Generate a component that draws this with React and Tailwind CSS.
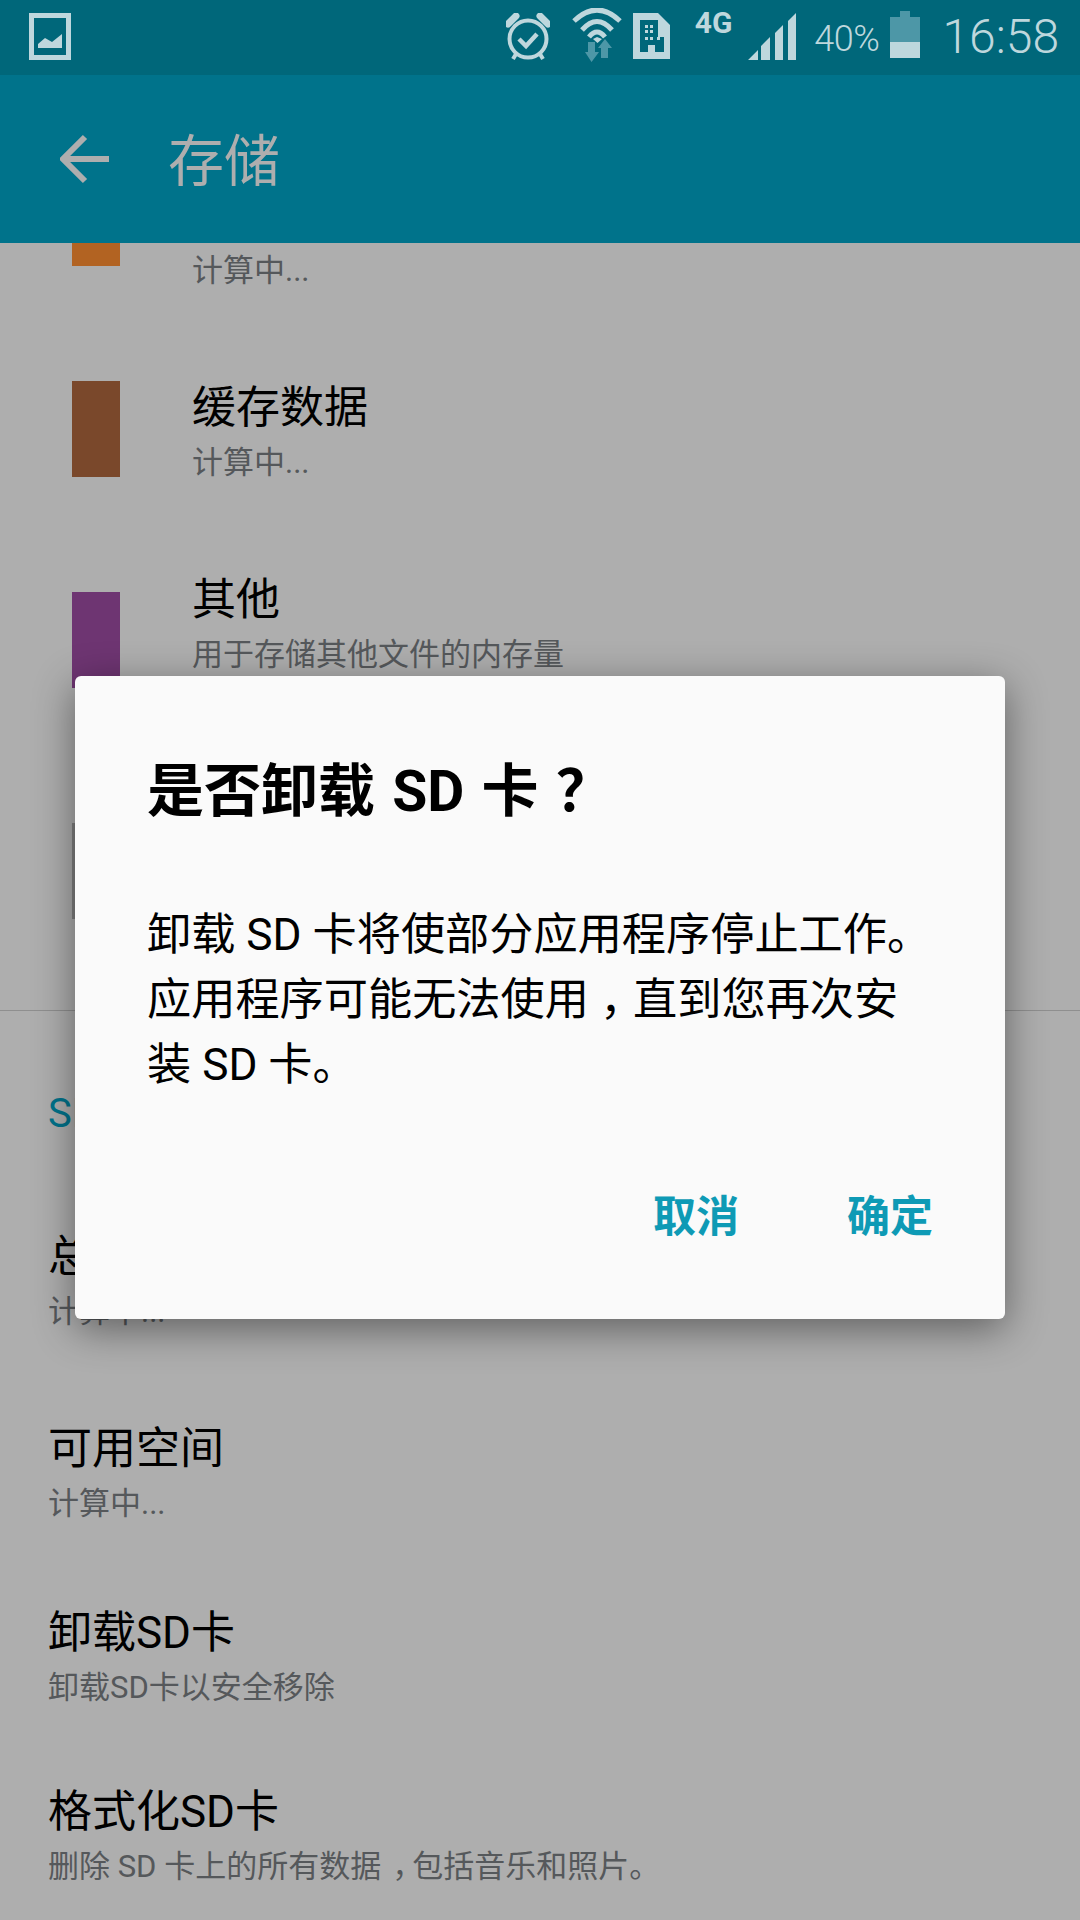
import React from 'react';

const FONT = "font-['Roboto','Noto_Sans_CJK_SC',sans-serif]";

// colours are the dimmed ones, the page sits behind a dialog scrim
const BLOCKS = [
  { color: 'bg-[#b26322]', mt: 'mt-0' },
  { color: 'bg-[#7a482b]', mt: 'mt-[115px]' },
  { color: 'bg-[#6e3572]', mt: 'mt-[115px]' },
  { color: 'bg-[#808080]', mt: 'mt-[135px]' },
];

const USAGE_ROWS = [
  // first title sits a little low, only its bottom edge shows under the app bar
  { title: '应用使用存储空间', sub: '计算中...', titleClass: 'translate-y-[6px]' },
  { title: '缓存数据', sub: '计算中...' },
  { title: '其他', sub: '用于存储其他文件的内存量' },
];

const SD_ROWS = [
  { title: '总空间', sub: '计算中...', h: 'h-[192px]' },
  { title: '可用空间', sub: '计算中...', h: 'h-[184px]', subClass: '-mt-[2px]' },
  { title: '卸载SD卡', sub: '卸载SD卡以安全移除', h: 'h-[179px]' },
  { title: '格式化SD卡', sub: <>删除 SD 卡上的所有数据<Comma />包括音乐和照片。</>, h: 'h-[110px]' },
];

function Comma() {
  return <span className="inline-block translate-x-[11px]">，</span>;
}

const ICON = '#bed7dd';
const DIM = '#4d97a7';
const BAR = '#00677a';

const PhotoIcon = () => (
  <svg width="42" height="47" viewBox="0 0 42 47" className="ml-[29px] mt-[13px] shrink-0">
    <path d="M0 0h42v47H0z M5 5v37h32V5z" fill={ICON} fillRule="evenodd" />
    <path d="M9 35v-4l7-6 7 4 10-8v14z" fill={ICON} />
  </svg>
);

const AlarmIcon = () => (
  <svg width="44" height="48" viewBox="0 0 44 48" className="shrink-0">
    <circle cx="22" cy="26" r="18.5" fill="none" stroke={ICON} strokeWidth="4" />
    <path d="M2 11 10 3" stroke={ICON} strokeWidth="7" strokeLinecap="round" />
    <path d="M42 11 34 3" stroke={ICON} strokeWidth="7" strokeLinecap="round" />
    <path d="M10 41 7 46M34 41l3 5" stroke={ICON} strokeWidth="4" />
    <path d="M13 26l7 7 11-12" fill="none" stroke={ICON} strokeWidth="4.5" />
  </svg>
);

const WifiIcon = () => (
  <svg width="50" height="54" viewBox="0 0 50 54" className="shrink-0">
    <path d="M2 13Q25 -9 48 13" fill="none" stroke={ICON} strokeWidth="5" />
    <path d="M10 22Q25 5 40 22" fill="none" stroke={ICON} strokeWidth="5" />
    <path d="M17 29Q25 19 33 29" fill="none" stroke={ICON} strokeWidth="5" />
    <path d="M21 31 25 29 30 31 25.500 35z" fill={ICON} />
    <path d="M16 34h7v10h4L19.500 54 13 44h3z" fill={DIM} />
    <path d="M29 50h7V40h4L33 31 26 40h3z" fill={DIM} />
  </svg>
);

const SimIcon = () => (
  <svg width="37" height="46" viewBox="0 0 37 46" className="shrink-0">
    <path d="M0 0h25l12 12v34H0z" fill={ICON} />
    <path d="M7 7h18v17h6v15h-9v-7h-7v7H7z" fill={BAR} />
    <path d="M12 12h3v3h-3zM17 12h3v3h-3zM12 17h3v3h-3zM17 17h3v3h-3zM12 24h3v3h-3zM17 24h3v3h-3zM24 24h3v3h-3z" fill={ICON} />
  </svg>
);

const SignalIcon = () => (
  <svg width="48" height="47" viewBox="0 0 48 47" className="shrink-0">
    <path d="M0 47 10 37v10zM13 47V33l9-9v23zM27 47V20l8-8v35zM40 47V8l8-8v47z" fill={ICON} />
  </svg>
);

const BatteryIcon = () => (
  <svg width="30" height="47" viewBox="0 0 30 47" className="shrink-0">
    <path d="M10 0h10v6h10v25H0V6h10z" fill={DIM} />
    <path d="M0 31h30v16H0z" fill={ICON} />
  </svg>
);

const StatusBar = () => (
  <div className="h-[75px] shrink-0 bg-[#00677a] flex items-start">
    <PhotoIcon />
    <div className="ml-auto flex items-start text-[#bed7dd]">
      <div className="mt-[13px]"><AlarmIcon /></div>
      <div className="ml-[22px] mt-[8px]"><WifiIcon /></div>
      <div className="ml-[11px] mt-[13px]"><SimIcon /></div>
      <div className="ml-[25px] mt-[7px] text-[30px] leading-[32px] font-bold">4G</div>
      <div className="ml-[16px] mt-[13px]"><SignalIcon /></div>
      <div className="ml-[18px] mt-[18px] text-[36px] leading-[42px] font-light tracking-[-0.5px]">40%</div>
      <div className="ml-[11px] mt-[11px]"><BatteryIcon /></div>
      <div className="ml-[22px] mr-[21px] mt-[9px] text-[48px] leading-[56px] font-light">16:58</div>
    </div>
  </div>
);

const AppBar = () => (
  <div className="h-[168px] shrink-0 bg-[#00738b] flex items-center">
    <svg width="50" height="50" viewBox="0 0 50 50" className="ml-[60px]">
      <path d="M49 25H4M25 3 3 25l22 22" fill="none" stroke="#aeaeae" strokeWidth="6" />
    </svg>
    <div className="ml-[58px] mt-[6px] text-[56px] leading-[64px] text-[#aeaeae]">存储</div>
  </div>
);

const Row = ({ title, sub, titleClass = '', subClass = '', className = '' }) => (
  <div className={className}>
    <div className={`text-[44px] leading-[56px] text-black whitespace-nowrap ${titleClass}`}>{title}</div>
    <div className={`mt-[7px] text-[31px] leading-[40px] text-[#55585b] whitespace-nowrap ${subClass}`}>{sub}</div>
  </div>
);

const UpperSection = () => (
  <div className="h-[767px] shrink-0 flex overflow-hidden">
    <div className="ml-[72px] w-[48px] -mt-[73px] shrink-0">
      {BLOCKS.map((b, i) => (
        <div key={i} className={`h-[96px] ${b.color} ${b.mt}`} />
      ))}
    </div>
    <div className="ml-[72px] -mt-[55px]">
      {USAGE_ROWS.map((r) => (
        <Row key={r.title} {...r} className="h-[192px]" />
      ))}
    </div>
  </div>
);

const LowerSection = () => (
  <div className="border-t border-[#8f8f8f] pl-[48px]">
    <div className="mt-[81px] text-[40px] leading-[44px] text-[#00738b]">SD 卡</div>
    <div className="mt-[93px]">
      {SD_ROWS.map((r) => (
        <Row key={r.title} title={r.title} sub={r.sub} subClass={r.subClass} className={r.h} />
      ))}
    </div>
  </div>
);

const UnmountDialog = () => (
  <div className="absolute left-[75px] top-[676px] w-[930px] h-[643px] rounded-[6px] bg-[#fafafa] shadow-[0_10px_40px_rgba(0,0,0,0.45)] px-[72px] flex flex-col">
    <div className="mt-[80px] text-[57px] leading-[72px] font-bold text-black whitespace-nowrap [word-spacing:3px]">
      是否卸载 SD 卡 <span className="inline-block">？</span>
    </div>
    <div className="mt-[75px] text-[44.2px] leading-[65px] text-black">
      <div className="whitespace-nowrap">卸载 SD 卡将使部分应用程序停止工作。</div>
      <div className="whitespace-nowrap">应用程序可能无法使用<Comma />直到您再次安</div>
      <div className="whitespace-nowrap">装 SD 卡。</div>
    </div>
    <div className="mt-auto mb-[74px] flex justify-end gap-[108px] text-[43px] leading-[56px] font-bold text-[#0e9ab5]">
      <span>取消</span>
      <span>确定</span>
    </div>
  </div>
);

export default function App() {
  return (
    <div className={`relative w-[1080px] h-[1920px] overflow-hidden bg-[#aeaeae] flex flex-col ${FONT}`}>
      <StatusBar />
      <AppBar />
      <UpperSection />
      <LowerSection />
      <UnmountDialog />
    </div>
  );
}
